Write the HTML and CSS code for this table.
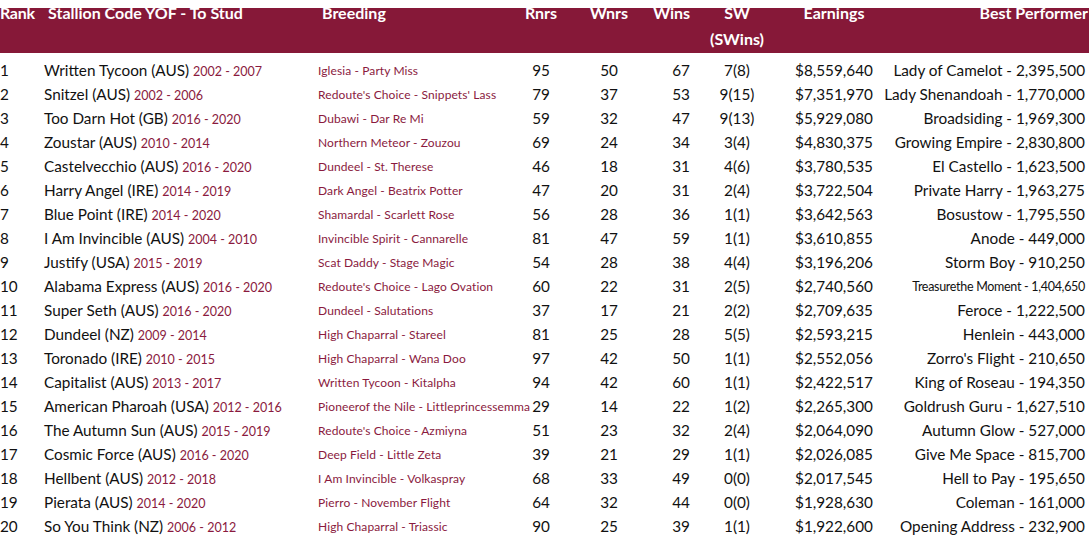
FILE: index.html
```html
<!DOCTYPE html>
<html>
<head>
<meta charset="utf-8">
<link rel="stylesheet" href="styles.css">
</head>
<body>
<div class="table">
  <div class="row head">
    <div class="c rank">Rank</div>
    <div class="c stallion">Stallion Code YOF - To Stud</div>
    <div class="c breeding">Breeding</div>
    <div class="c num ctr">Rnrs</div>
    <div class="c num ctr">Wnrs</div>
    <div class="c num right">Wins</div>
    <div class="c num ctr">SW<br>(SWins)</div>
    <div class="c num ctr">Earnings</div>
    <div class="c best">Best Performer</div>
  </div>
  <div class="row"><div class="c rank">1</div><div class="c stallion">Written Tycoon (AUS) <span class="yr">2002 - 2007</span></div><div class="c breeding">Iglesia - Party Miss</div><div class="c ctr">95</div><div class="c ctr">50</div><div class="c right">67</div><div class="c ctr">7(8)</div><div class="c ctr">$8,559,640</div><div class="c best">Lady of Camelot - 2,395,500</div></div>
  <div class="row"><div class="c rank">2</div><div class="c stallion">Snitzel (AUS) <span class="yr">2002 - 2006</span></div><div class="c breeding">Redoute's Choice - Snippets' Lass</div><div class="c ctr">79</div><div class="c ctr">37</div><div class="c right">53</div><div class="c ctr">9(15)</div><div class="c ctr">$7,351,970</div><div class="c best">Lady Shenandoah - 1,770,000</div></div>
  <div class="row"><div class="c rank">3</div><div class="c stallion">Too Darn Hot (GB) <span class="yr">2016 - 2020</span></div><div class="c breeding">Dubawi - Dar Re Mi</div><div class="c ctr">59</div><div class="c ctr">32</div><div class="c right">47</div><div class="c ctr">9(13)</div><div class="c ctr">$5,929,080</div><div class="c best">Broadsiding - 1,969,300</div></div>
  <div class="row"><div class="c rank">4</div><div class="c stallion">Zoustar (AUS) <span class="yr">2010 - 2014</span></div><div class="c breeding">Northern Meteor - Zouzou</div><div class="c ctr">69</div><div class="c ctr">24</div><div class="c right">34</div><div class="c ctr">3(4)</div><div class="c ctr">$4,830,375</div><div class="c best">Growing Empire - 2,830,800</div></div>
  <div class="row"><div class="c rank">5</div><div class="c stallion">Castelvecchio (AUS) <span class="yr">2016 - 2020</span></div><div class="c breeding">Dundeel - St. Therese</div><div class="c ctr">46</div><div class="c ctr">18</div><div class="c right">31</div><div class="c ctr">4(6)</div><div class="c ctr">$3,780,535</div><div class="c best">El Castello - 1,623,500</div></div>
  <div class="row"><div class="c rank">6</div><div class="c stallion">Harry Angel (IRE) <span class="yr">2014 - 2019</span></div><div class="c breeding">Dark Angel - Beatrix Potter</div><div class="c ctr">47</div><div class="c ctr">20</div><div class="c right">31</div><div class="c ctr">2(4)</div><div class="c ctr">$3,722,504</div><div class="c best">Private Harry - 1,963,275</div></div>
  <div class="row"><div class="c rank">7</div><div class="c stallion">Blue Point (IRE) <span class="yr">2014 - 2020</span></div><div class="c breeding">Shamardal - Scarlett Rose</div><div class="c ctr">56</div><div class="c ctr">28</div><div class="c right">36</div><div class="c ctr">1(1)</div><div class="c ctr">$3,642,563</div><div class="c best">Bosustow - 1,795,550</div></div>
  <div class="row"><div class="c rank">8</div><div class="c stallion">I Am Invincible (AUS) <span class="yr">2004 - 2010</span></div><div class="c breeding">Invincible Spirit - Cannarelle</div><div class="c ctr">81</div><div class="c ctr">47</div><div class="c right">59</div><div class="c ctr">1(1)</div><div class="c ctr">$3,610,855</div><div class="c best">Anode - 449,000</div></div>
  <div class="row"><div class="c rank">9</div><div class="c stallion">Justify (USA) <span class="yr">2015 - 2019</span></div><div class="c breeding">Scat Daddy - Stage Magic</div><div class="c ctr">54</div><div class="c ctr">28</div><div class="c right">38</div><div class="c ctr">4(4)</div><div class="c ctr">$3,196,206</div><div class="c best">Storm Boy - 910,250</div></div>
  <div class="row"><div class="c rank">10</div><div class="c stallion">Alabama Express (AUS) <span class="yr">2016 - 2020</span></div><div class="c breeding">Redoute's Choice - Lago Ovation</div><div class="c ctr">60</div><div class="c ctr">22</div><div class="c right">31</div><div class="c ctr">2(5)</div><div class="c ctr">$2,740,560</div><div class="c best small">Treasurethe Moment - 1,404,650</div></div>
  <div class="row"><div class="c rank">11</div><div class="c stallion">Super Seth (AUS) <span class="yr">2016 - 2020</span></div><div class="c breeding">Dundeel - Salutations</div><div class="c ctr">37</div><div class="c ctr">17</div><div class="c right">21</div><div class="c ctr">2(2)</div><div class="c ctr">$2,709,635</div><div class="c best">Feroce - 1,222,500</div></div>
  <div class="row"><div class="c rank">12</div><div class="c stallion">Dundeel (NZ) <span class="yr">2009 - 2014</span></div><div class="c breeding">High Chaparral - Stareel</div><div class="c ctr">81</div><div class="c ctr">25</div><div class="c right">28</div><div class="c ctr">5(5)</div><div class="c ctr">$2,593,215</div><div class="c best">Henlein - 443,000</div></div>
  <div class="row"><div class="c rank">13</div><div class="c stallion">Toronado (IRE) <span class="yr">2010 - 2015</span></div><div class="c breeding">High Chaparral - Wana Doo</div><div class="c ctr">97</div><div class="c ctr">42</div><div class="c right">50</div><div class="c ctr">1(1)</div><div class="c ctr">$2,552,056</div><div class="c best">Zorro's Flight - 210,650</div></div>
  <div class="row"><div class="c rank">14</div><div class="c stallion">Capitalist (AUS) <span class="yr">2013 - 2017</span></div><div class="c breeding">Written Tycoon - Kitalpha</div><div class="c ctr">94</div><div class="c ctr">42</div><div class="c right">60</div><div class="c ctr">1(1)</div><div class="c ctr">$2,422,517</div><div class="c best">King of Roseau - 194,350</div></div>
  <div class="row"><div class="c rank">15</div><div class="c stallion">American Pharoah (USA) <span class="yr">2012 - 2016</span></div><div class="c breeding">Pioneerof the Nile - Littleprincessemma</div><div class="c ctr">29</div><div class="c ctr">14</div><div class="c right">22</div><div class="c ctr">1(2)</div><div class="c ctr">$2,265,300</div><div class="c best">Goldrush Guru - 1,627,510</div></div>
  <div class="row"><div class="c rank">16</div><div class="c stallion">The Autumn Sun (AUS) <span class="yr">2015 - 2019</span></div><div class="c breeding">Redoute's Choice - Azmiyna</div><div class="c ctr">51</div><div class="c ctr">23</div><div class="c right">32</div><div class="c ctr">2(4)</div><div class="c ctr">$2,064,090</div><div class="c best">Autumn Glow - 527,000</div></div>
  <div class="row"><div class="c rank">17</div><div class="c stallion">Cosmic Force (AUS) <span class="yr">2016 - 2020</span></div><div class="c breeding">Deep Field - Little Zeta</div><div class="c ctr">39</div><div class="c ctr">21</div><div class="c right">29</div><div class="c ctr">1(1)</div><div class="c ctr">$2,026,085</div><div class="c best">Give Me Space - 815,700</div></div>
  <div class="row"><div class="c rank">18</div><div class="c stallion">Hellbent (AUS) <span class="yr">2012 - 2018</span></div><div class="c breeding">I Am Invincible - Volkaspray</div><div class="c ctr">68</div><div class="c ctr">33</div><div class="c right">49</div><div class="c ctr">0(0)</div><div class="c ctr">$2,017,545</div><div class="c best">Hell to Pay - 195,650</div></div>
  <div class="row"><div class="c rank">19</div><div class="c stallion">Pierata (AUS) <span class="yr">2014 - 2020</span></div><div class="c breeding">Pierro - November Flight</div><div class="c ctr">64</div><div class="c ctr">32</div><div class="c right">44</div><div class="c ctr">0(0)</div><div class="c ctr">$1,928,630</div><div class="c best">Coleman - 161,000</div></div>
  <div class="row"><div class="c rank">20</div><div class="c stallion">So You Think (NZ) <span class="yr">2006 - 2012</span></div><div class="c breeding">High Chaparral - Triassic</div><div class="c ctr">90</div><div class="c ctr">25</div><div class="c right">39</div><div class="c ctr">1(1)</div><div class="c ctr">$1,922,600</div><div class="c best">Opening Address - 232,900</div></div>
</div>
</body>
</html>
```
FILE: styles.css
```css
html, body {
  margin: 0;
  padding: 0;
  background: #ffffff;
}
body {
  font-family: Lato, "Liberation Sans", sans-serif;
  color: #111111;
}
.table {
  padding-top: 8px;
  width: 1089px;
}
.row {
  display: grid;
  grid-template-columns: 44px 274px 196px 54px 82px 40px 94px 100px 201px;
  height: 24px;
  align-items: center;
  font-size: 15.3px;
  white-space: nowrap;
}
.row.head {
  background: #861838;
  color: #ffffff;
  font-weight: 700;
  font-size: 16px;
  height: 45px;
  align-items: start;
  line-height: 13px;
  margin-bottom: 5px;
  width: 1089px;
}
.row.head .c {
  margin-top: -2px;
}
.row.head .num {
  line-height: 26px;
  margin-top: -8px;
}
.row.head .stallion,
.row.head .breeding {
  padding-left: 4px;
}
.row.head .rank {
  letter-spacing: -0.3px;
}
.row.head .best {
  margin-right: -3px;
}
.ctr {
  text-align: center;
}
.right {
  text-align: right;
}
.best {
  display: flex;
  justify-content: flex-end;
}
.small {
  font-size: 12.5px;
  letter-spacing: -0.3px;
}
.yr {
  color: #8a1a3e;
  font-size: 12.5px;
}
.breeding {
  color: #8a1a3e;
  font-size: 12px;
  letter-spacing: 0.1px;
}
.row.head .breeding {
  color: #ffffff;
  font-size: 16px;
  letter-spacing: 0;
}
```
